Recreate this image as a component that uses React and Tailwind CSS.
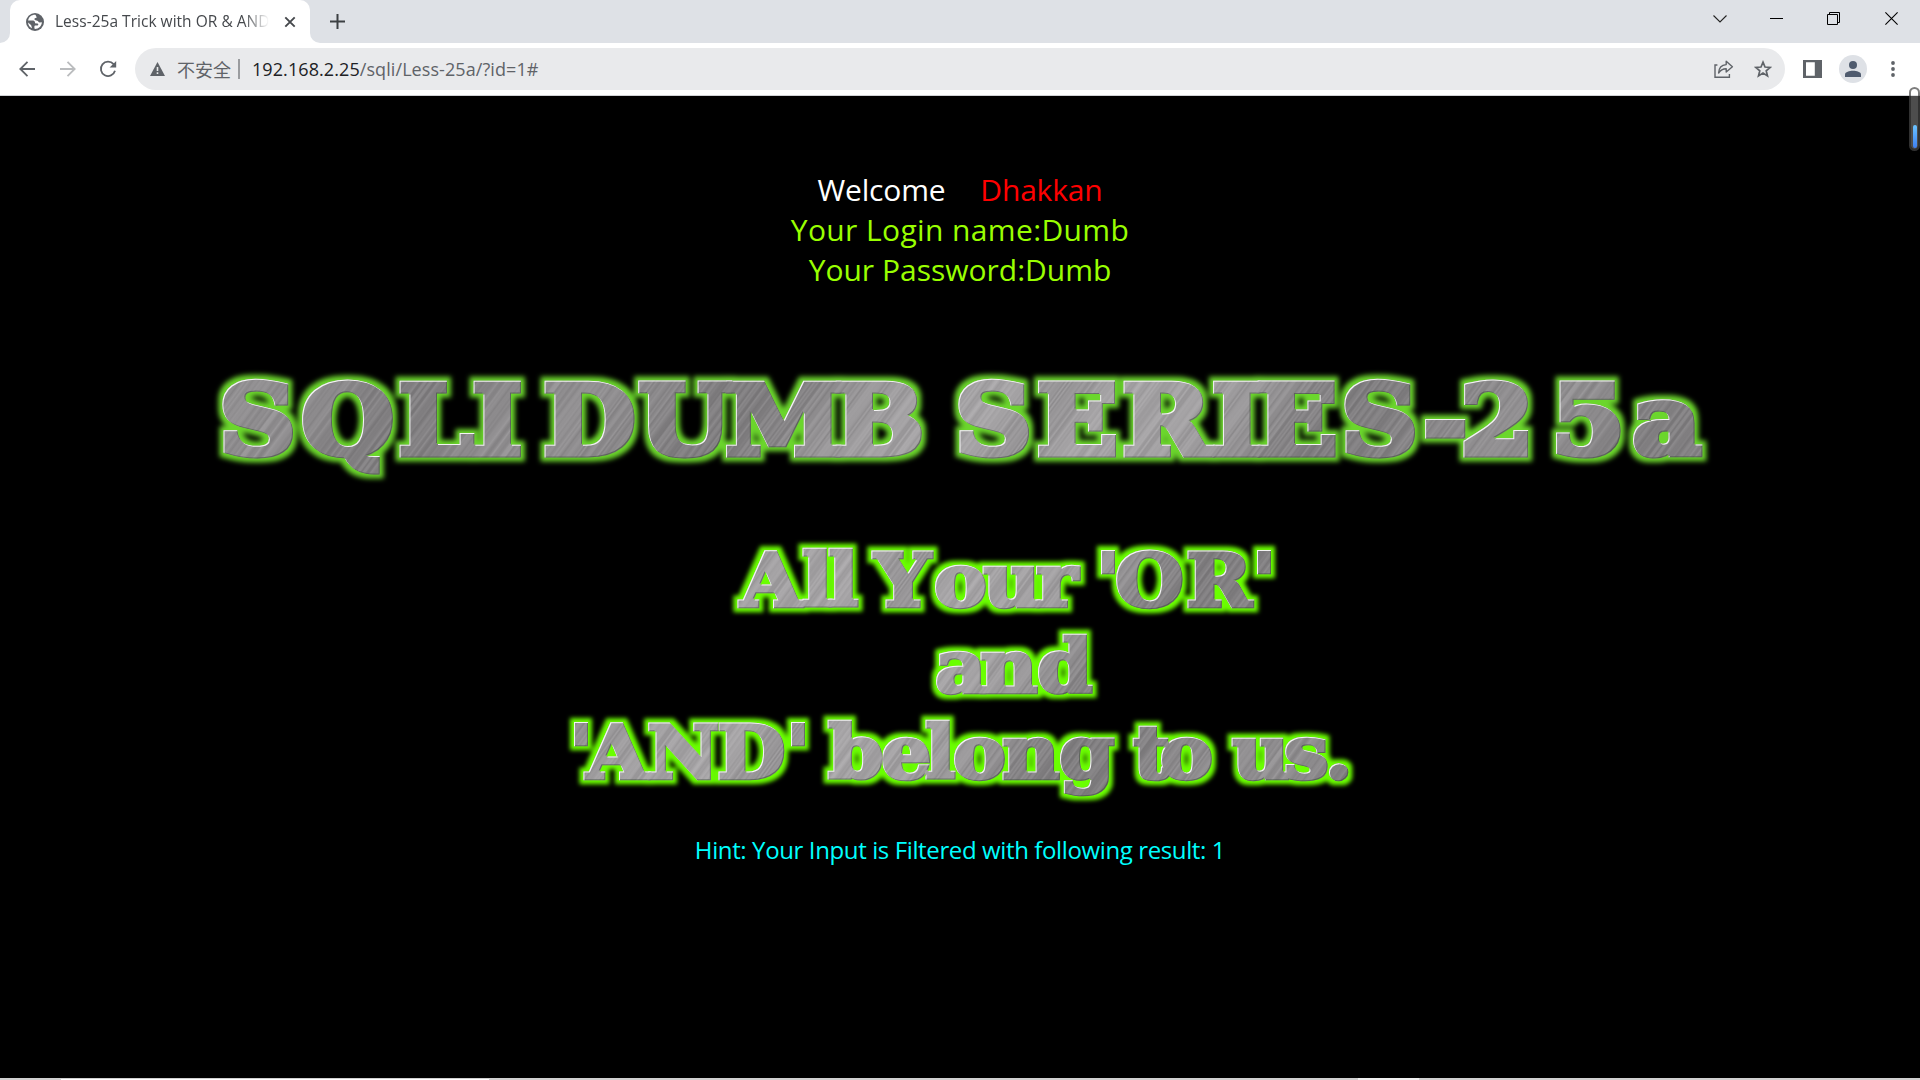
import React from "react";

const SLAB = '"DejaVu Serif", serif';

// Each banner line: the text, its size, its baseline and the left ink edge of every glyph.
const BANNER = [
  { text: "SQLI", y: 358.5, at: [222, 302, 399, 473] },
  { text: "DUMB", y: 358.5, at: [544, 638, 726, 835] },
  { text: "SERIES-25a", y: 358.5, at: [958, 1037.5, 1123, 1212.5, 1257, 1344, 1425, 1463, 1555, 1632] },
];

const SLOGAN = [
  { text: "All", y: 510, at: [737, 802, 828] },
  { text: "Your", y: 510, at: [871, 934, 982, 1036] },
  { text: "'OR'", y: 510, at: [1100, 1116, 1187, 1256] },
  { text: "and", y: 596, at: [935, 980, 1037] },
  { text: "'AND'", y: 682.5, at: [573, 583, 648, 718, 790] },
  { text: "belong", y: 682.5, at: [827, 881, 925, 953, 1002, 1059] },
  { text: "to", y: 682.5, at: [1132, 1160] },
  { text: "us.", y: 682.5, at: [1231, 1285, 1328] },
];

const ctx = document.createElement("canvas").getContext("2d");

// Pen position that puts the stroked glyph's left edge at `ink`, in the stretched space.
function originX(ch, size, ink, stretch, stroke) {
  ctx.font = `bold ${size}px ${SLAB}`;
  return ink / stretch + stroke / 2 + ctx.measureText(ch).actualBoundingBoxLeft;
}

// Brushed metal: closely spaced grey stops around a slow light/dark wave.
const METAL = Array.from({ length: 321 }, (_, i) => {
  const wave = Math.sin(i / 31) * 12 + Math.sin(i / 67 + 1) * 10;
  const grain = Math.abs((Math.sin(i * 12.9898) * 43758.5453) % 1) * 24 - 12;
  const v = Math.round(143 + wave + grain);
  return { offset: i / 320, color: `rgb(${v},${v - 2},${v})` };
});

function GlowFilter({ id, color, radius, blur }) {
  return (
    <filter id={id} filterUnits="userSpaceOnUse" x="0" y="0" width="1920" height="980" colorInterpolationFilters="sRGB">
      <feMorphology in="SourceAlpha" operator="dilate" radius={radius} result="fat" />
      <feGaussianBlur in="fat" stdDeviation={blur} result="soft" />
      <feFlood floodColor={color} />
      <feComposite in2="soft" operator="in" result="glow" />
      <feOffset in="SourceAlpha" dx="1.1" dy="1.1" result="dr" />
      <feFlood floodColor="#f4f4f4" />
      <feComposite in2="SourceAlpha" operator="in" />
      <feComposite in2="dr" operator="out" result="light" />
      <feOffset in="SourceAlpha" dx="-1.3" dy="-1.3" result="ul" />
      <feFlood floodColor="#3c4a3a" floodOpacity="0.55" />
      <feComposite in2="SourceAlpha" operator="in" />
      <feComposite in2="ul" operator="out" result="dark" />
      <feMerge>
        <feMergeNode in="glow" />
        <feMergeNode in="SourceGraphic" />
        <feMergeNode in="dark" />
        <feMergeNode in="light" />
      </feMerge>
    </filter>
  );
}

function Words({ words, filter, size, stroke, stretch }) {
  return (
    <g filter={filter}>
      <g
        transform={`scale(${stretch} 1)`}
        fill="url(#metal)"
        stroke="url(#metal)"
        strokeWidth={stroke}
        fontFamily={SLAB}
        fontWeight="700"
        fontSize={size}
      >
        {words.map((w) => (
          <text key={w.text} y={w.y} x={w.at.map((v, i) => originX(w.text[i], size, v, stretch, stroke)).join(" ")}>
            {w.text}
          </text>
        ))}
      </g>
    </g>
  );
}

function Banner() {
  return (
    <svg width="1920" height="980" viewBox="0 0 1920 980" className="block">
      <defs>
        <linearGradient id="metal" gradientUnits="userSpaceOnUse" x1="0" y1="0" x2="400" y2="270" spreadMethod="reflect">
          {METAL.map((s) => (
            <stop key={s.offset} offset={s.offset} stopColor={s.color} />
          ))}
        </linearGradient>
        <GlowFilter id="glowA" color="#6bd62c" radius="4" blur="2.5" />
        <GlowFilter id="glowB" color="#6aff00" radius="4" blur="2.2" />
      </defs>
      <Words words={BANNER} filter="url(#glowA)" size={96} stroke={7} stretch={1.1} />
      <Words words={SLOGAN} filter="url(#glowB)" size={72.5} stroke={4.5} stretch={1.08} />
    </svg>
  );
}

function TabStrip() {
  return (
    <div className="flex h-[43px] items-start bg-[#dee1e6]">
      <div className="flex h-[43px] w-[10px] items-end bg-white">
        <div className="h-full w-full rounded-br-[10px] bg-[#dee1e6]" />
      </div>
      <div className="flex h-[43px] w-[300px] items-center rounded-t-[10px] bg-white pl-4">
        <svg width="18" height="18" viewBox="0 0 18 18" className="shrink-0">
          <circle cx="9" cy="9" r="9" fill="#5f6368" />
          <path d="M9.6 1.9 C6 1.6 2.8 3.8 2.1 7.6 L7 7.6 C8.6 7.8 9.3 8.9 9 10.2 L11.4 10.4 C12.6 10.6 12.6 12 11.6 12.4 L9 12.4 C8.2 13 8.2 14.6 8.8 15.9 C12.6 16 15.8 13 15.9 9.2 L13.6 9.4 C12.8 9.4 12.2 8.8 12 8 L9.4 7.2 C8 6.6 8.2 5 9.6 4.9 L10.8 4.6 Z" fill="#fff" />
          <path d="M2.1 9.4 L5.2 12.2 L6 15.2 C3.6 14 2.1 12 2.1 9.4Z" fill="#fff" />
        </svg>
        <div className="ml-[11px] mt-[1px] w-[214px] overflow-hidden whitespace-nowrap font-['Open_Sans',sans-serif] text-[15.5px] tracking-[0.02px] text-[#45484c] [mask-image:linear-gradient(to_right,black_88%,transparent)]">
          Less-25a Trick with OR &amp; AND
        </div>
        <svg width="12" height="12" viewBox="0 0 12 12" className="ml-[15px] shrink-0" stroke="#45484c" strokeWidth="1.9">
          <path d="M1.3 1.3 L10.7 10.7 M10.7 1.3 L1.3 10.7" />
        </svg>
      </div>
      <div className="h-[43px] w-[10px] bg-white">
        <div className="h-full w-full rounded-bl-[10px] bg-[#dee1e6]" />
      </div>
      <svg width="15" height="15" viewBox="0 0 15 15" className="ml-[10px] mt-[14px]" stroke="#3c4043" strokeWidth="2">
        <path d="M7.5 0 V15 M0 7.5 H15" />
      </svg>
      <div className="ml-auto flex h-[37px] items-center">
        <svg width="14" height="8" viewBox="0 0 14 8" className="mr-[43px] mt-[1px]" fill="none" stroke="#222" strokeWidth="1.1">
          <path d="M0.5 0.5 L7 7 L13.5 0.5" />
        </svg>
        <div className="mr-[44px] h-px w-[13px] bg-black" />
        <svg width="13" height="13" viewBox="0 0 13 13" className="mr-[45px]" fill="none" stroke="#000" strokeWidth="1">
          <path d="M0.5 2.5 H10.5 V12.5 H0.5Z M2.5 2.5 V0.5 H12.5 V10.5 H10.5" />
        </svg>
        <svg width="13" height="13" viewBox="0 0 13 13" className="mr-[22px]" stroke="#000" strokeWidth="1.1">
          <path d="M0.4 0.4 L12.6 12.6 M12.6 0.4 L0.4 12.6" />
        </svg>
      </div>
    </div>
  );
}

function Toolbar() {
  return (
    <div className="flex h-[53px] items-center border-b border-[#d0d2d5] bg-white">
      <svg width="16" height="16" viewBox="0 0 16 16" className="ml-[19px]" fill="none" stroke="#5f6368" strokeWidth="1.8">
        <path d="M16 8 H1.5 M8.5 0.8 L1.3 8 L8.5 15.2" />
      </svg>
      <svg width="16" height="16" viewBox="0 0 16 16" className="ml-[25px]" fill="none" stroke="#babcbe" strokeWidth="1.8">
        <path d="M0 8 H14.5 M7.5 0.8 L14.7 8 L7.5 15.2" />
      </svg>
      <svg width="18" height="18" viewBox="0 0 18 18" className="ml-[23px]" fill="none">
        <path d="M14.6 4.2 A7.2 7.2 0 1 0 16 10.8" stroke="#5f6368" strokeWidth="1.8" />
        <path d="M17.2 1 V7.6 H10.6Z" fill="#5f6368" />
      </svg>
      <div className="ml-[18px] flex h-[42px] w-[1650px] items-center rounded-full bg-[#e9eaec] pl-[15px] pr-[13.5px] font-['Open_Sans','Noto_Sans_CJK_SC',sans-serif] text-[18px] text-[#5f6368]">
        <svg width="15" height="14" viewBox="0 0 15 14">
          <path d="M7.5 0 L15 14 H0Z" fill="#5f6368" />
          <path d="M6.7 5 H8.3 V9 H6.7Z M6.7 10.3 H8.3 V12 H6.7Z" fill="#e9eaec" />
        </svg>
        <span className="ml-3 w-[54px] whitespace-nowrap font-['Noto_Sans_CJK_SC',sans-serif]">不安全</span>
        <div className="ml-[7px] h-5 w-[2px] bg-[#9a9c9f]" />
        <div className="ml-[12px] whitespace-nowrap tracking-[0.08px]">
          <span className="text-[#202124]">192.168.2.25</span>/sqli/Less-25a/?id=1#
        </div>
        <svg width="20" height="18" viewBox="0 0 20 18" className="ml-auto" fill="none" stroke="#5f6368" strokeWidth="1.4">
          <path d="M3.4 5 H1 V17.2 H15.4 V14" />
          <path d="M4.6 13 C4.8 8 7.6 5 12.2 4.6 V1.2 L18.4 6.8 L12.2 12 V8.8 C8.8 8.8 6.4 10.2 4.6 13Z" strokeLinejoin="round" />
        </svg>
        <svg width="18" height="18" viewBox="0 0 18 18" className="ml-5" fill="none" stroke="#5f6368" strokeWidth="1.7">
          <path d="M9 2.2 L11 7 L16.2 7.4 L12.2 10.8 L13.5 15.9 L9 13.1 L4.5 15.9 L5.8 10.8 L1.8 7.4 L7 7Z" />
        </svg>
      </div>
      <svg width="19" height="18" viewBox="0 0 19 18" className="ml-[18px]">
        <path d="M0 0 H19 V18 H0Z M3 2.2 V15.8 H11.8 V2.2Z" fill="#5f6368" fillRule="evenodd" />
      </svg>
      <div className="ml-[17px] flex size-7 items-center justify-center rounded-full bg-[#dee1e6]">
        <svg width="16" height="16" viewBox="0 0 16 16" fill="#4f5b6e">
          <circle cx="8" cy="4" r="4" />
          <path d="M0 16 V13.5 C0 10.8 4.5 9.7 8 9.7 S16 10.8 16 13.5 V16Z" />
        </svg>
      </div>
      <svg width="4" height="16" viewBox="0 0 4 16" className="ml-[23.5px]" fill="#5f6368">
        <circle cx="2" cy="2" r="1.9" />
        <circle cx="2" cy="8" r="1.9" />
        <circle cx="2" cy="14" r="1.9" />
      </svg>
    </div>
  );
}

export default function App() {
  return (
    <div className="relative flex h-[1080px] w-[1920px] flex-col overflow-hidden bg-black">
      <TabStrip />
      <Toolbar />
      <main className="relative h-[982px] font-['Open_Sans',sans-serif]">
        <div className="absolute inset-0">
          <Banner />
        </div>
        <div className="relative flex flex-col items-center pt-[74px] text-[30px] leading-[40px] text-[#99ff00]">
          <div className="flex gap-[35px] tracking-[-0.2px]">
            <span className="text-white">Welcome</span>
            <span className="text-[#ff0000]">Dhakkan</span>
          </div>
          <div className="tracking-[0.38px]">Your Login name:Dumb</div>
          <div>Your Password:Dumb</div>
        </div>
        <div className="relative mt-[544px] text-center text-[24px] leading-8 tracking-[-0.38px] text-[#00ffff]">
          Hint: Your Input is Filtered with following result: 1
        </div>
      </main>
      <div className="flex h-[2px] items-end bg-[#d0d0d0]">
        <div className="ml-[61px] h-px w-[428px] bg-white" />
        <div className="ml-[869px] h-[2px] w-[61px] bg-[#f0f0f0]" />
      </div>
      <div className="absolute left-[1909px] top-[87px] flex h-[64px] w-[11px] items-end justify-center rounded-[6px] border-2 border-[#464646]/70 bg-white/30 bg-clip-padding pb-[1px]">
        <div className="h-[23px] w-[4px] rounded-full bg-linear-to-b from-[#6cc4ff] to-[#3f7ff2]" />
      </div>
    </div>
  );
}
